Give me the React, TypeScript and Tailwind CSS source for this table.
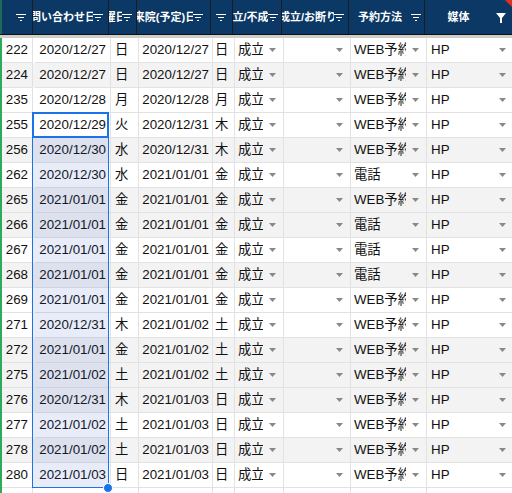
const COLS = "grid grid-cols-[33px_76px_28px_74px_22px_49px_67px_76px_87px]";
const FONT = "font-['Liberation_Sans','Noto_Sans_CJK_JP',sans-serif]";

type Row = {
  id: string;
  inq: string;
  inqDay: string;
  visit: string;
  visitDay: string;
  method: string;
  gray?: boolean;
};

const rows: Row[] = [
  { id: "222", inq: "2020/12/27", inqDay: "日", visit: "2020/12/27", visitDay: "日", method: "WEB予約" },
  { id: "224", inq: "2020/12/27", inqDay: "日", visit: "2020/12/27", visitDay: "日", method: "WEB予約", gray: true },
  { id: "235", inq: "2020/12/28", inqDay: "月", visit: "2020/12/28", visitDay: "月", method: "WEB予約" },
  { id: "255", inq: "2020/12/29", inqDay: "火", visit: "2020/12/31", visitDay: "木", method: "WEB予約" },
  { id: "256", inq: "2020/12/30", inqDay: "水", visit: "2020/12/31", visitDay: "木", method: "WEB予約", gray: true },
  { id: "262", inq: "2020/12/30", inqDay: "水", visit: "2021/01/01", visitDay: "金", method: "電話" },
  { id: "265", inq: "2021/01/01", inqDay: "金", visit: "2021/01/01", visitDay: "金", method: "WEB予約", gray: true },
  { id: "266", inq: "2021/01/01", inqDay: "金", visit: "2021/01/01", visitDay: "金", method: "電話", gray: true },
  { id: "267", inq: "2021/01/01", inqDay: "金", visit: "2021/01/01", visitDay: "金", method: "電話" },
  { id: "268", inq: "2021/01/01", inqDay: "金", visit: "2021/01/01", visitDay: "金", method: "電話", gray: true },
  { id: "269", inq: "2021/01/01", inqDay: "金", visit: "2021/01/01", visitDay: "金", method: "WEB予約" },
  { id: "271", inq: "2020/12/31", inqDay: "木", visit: "2021/01/02", visitDay: "土", method: "WEB予約" },
  { id: "272", inq: "2021/01/01", inqDay: "金", visit: "2021/01/02", visitDay: "土", method: "WEB予約", gray: true },
  { id: "275", inq: "2021/01/02", inqDay: "土", visit: "2021/01/02", visitDay: "土", method: "WEB予約", gray: true },
  { id: "276", inq: "2020/12/31", inqDay: "木", visit: "2021/01/03", visitDay: "日", method: "WEB予約", gray: true },
  { id: "277", inq: "2021/01/02", inqDay: "土", visit: "2021/01/03", visitDay: "日", method: "WEB予約" },
  { id: "278", inq: "2021/01/02", inqDay: "土", visit: "2021/01/03", visitDay: "日", method: "WEB予約", gray: true },
  { id: "280", inq: "2021/01/03", inqDay: "日", visit: "2021/01/03", visitDay: "日", method: "WEB予約" },
];

function FilterLines() {
  return (
    <svg width="10" height="8" viewBox="0 0 10 8" className="shrink-0">
      <path d="M0 1.5H10M2 4.5H8M4 7.5H6" stroke="white" strokeWidth="1" />
    </svg>
  );
}

function Funnel() {
  return (
    <svg width="10" height="10" viewBox="0 0 10 10" className="shrink-0">
      <path d="M0 0H10L6 5V10H4V5Z" fill="white" />
    </svg>
  );
}

function Arrow() {
  return (
    <svg width="7" height="4" viewBox="0 0 7 4" className="shrink-0">
      <path d="M0 0H7L3.5 4Z" fill="#888888" />
    </svg>
  );
}

function Head({ label, mr = "mr-[5px]" }: { label: string; mr?: string }) {
  return (
    <div className="flex items-center h-[34px] border-r border-[#1c1c1c] overflow-hidden">
      <div className="flex-1 min-w-0 overflow-hidden flex justify-center">
        <span className="shrink-0 whitespace-nowrap text-white font-bold text-[11px]">{label}</span>
      </div>
      <span className={mr}>
        <FilterLines />
      </span>
    </div>
  );
}

function Cell({ children, className = "" }: { children?: React.ReactNode; className?: string }) {
  return (
    <div className={`h-[25px] flex items-center border-r border-b border-[#e2e2e2] overflow-hidden whitespace-nowrap ${className}`}>
      {children}
    </div>
  );
}

function Drop({ text, className = "" }: { text: string; className?: string }) {
  return (
    <Cell className={`pl-[3px] pr-[7px] ${className}`}>
      <span className="flex-1 min-w-0 overflow-hidden mr-[6px]">{text}</span>
      <Arrow />
    </Cell>
  );
}

export default function App() {
  return (
    <div className={`w-[512px] h-[493px] overflow-hidden bg-white text-[13.33px] text-[#111] ${FONT}`}>
      <div className={`${COLS} bg-[#0b3865] border-b border-[#111] relative`}>
        <div className="flex items-center justify-end h-[34px] border-r border-[#1c1c1c] border-l-2 border-l-[#1f6b5a] pr-[6px]">
          <FilterLines />
        </div>
        <Head label="問い合わせ日" />
        <Head label="曜日" mr="mr-[4px]" />
        <Head label="来院(予定)日" mr="mr-[7px]" />
        <Head label="" mr="mr-[6px]" />
        <Head label="成立/不成約" mr="mr-[3px]" />
        <Head label="成立/お断り" mr="mr-[4px]" />
        <Head label="予約方法" mr="mr-[3px]" />
        <div className="relative flex items-center h-[34px]">
          <div className="flex-1 flex justify-center pr-[4px]">
            <span className="text-white font-bold text-[11px]">媒体</span>
          </div>
          <span className="mr-[6px] mt-[2px]">
            <Funnel />
          </span>
          <div className="absolute top-0 right-0 w-0 h-0 border-t-[7px] border-t-[#e0301e] border-l-[7px] border-l-transparent" />
        </div>
      </div>
      <div className="h-[3px] bg-[#cdcdcd]" />
      <div className="relative border-l-2 border-l-[#2eaa5c]">
        {rows.map((r) => (
          <div key={r.id} className={`${COLS} ${r.gray ? "bg-[#f3f3f3]" : "bg-white"}`}>
            <Cell className="justify-end pr-[4px] w-[31px]">{r.id}</Cell>
            <Cell className="justify-end pr-[4px]">{r.inq}</Cell>
            <Cell className="pl-[4px]">{r.inqDay}</Cell>
            <Cell className="justify-end pr-[3px]">{r.visit}</Cell>
            <Cell className="pl-[2px]">{r.visitDay}</Cell>
            <Drop text="成立" />
            <Drop text="" />
            <Drop text={r.method} />
            <Drop text="HP" className="pr-[6px] pl-[4px]" />
          </div>
        ))}
        <div className={COLS}>
          <Cell className="w-[31px]" />
          <Cell />
          <Cell />
          <Cell />
          <Cell />
          <Cell />
          <Cell />
          <Cell />
          <Cell />
        </div>

        {/* selection on column B, rows 255..280 */}
        <div className="absolute left-[30px] top-[100px] w-[77px] h-[350px] bg-[rgba(40,80,190,0.11)] pointer-events-none" />
        <div className="absolute left-[30px] top-[74px] w-[77px] h-[376px] border border-[#1a73e8] pointer-events-none" />
        <div className="absolute left-[30px] top-[74px] w-[77px] h-[26px] border-2 border-[#1a73e8] pointer-events-none" />
        <div className="absolute left-[101px] top-[445px] w-[10px] h-[10px] rounded-full bg-[#1a73e8] border border-white pointer-events-none" />
      </div>
    </div>
  );
}
